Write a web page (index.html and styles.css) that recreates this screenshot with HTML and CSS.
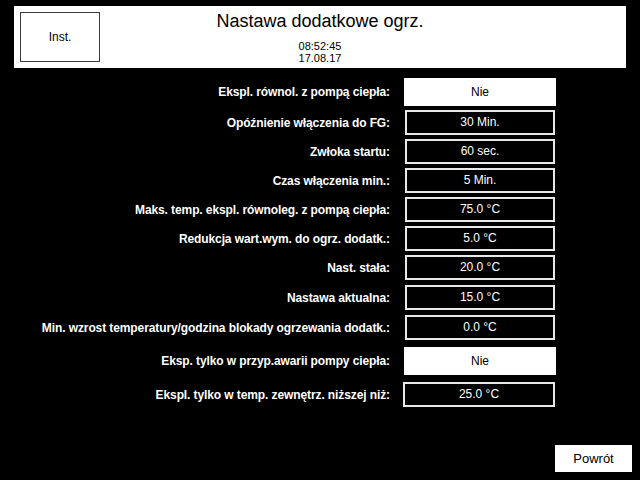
FILE: index.html
```html
<!DOCTYPE html>
<html lang="pl">
<head>
    <meta charset="UTF-8">
    <title>Nastawa dodatkowe ogrz.</title>
    <link rel="stylesheet" href="styles.css">
</head>
<body>

    <div class="header">
        <button class="btn-inst">Inst.</button>
        <div class="title">
            <h1>Nastawa dodatkowe ogrz.</h1>
            <div class="clock">08:52:45<br>17.08.17</div>
        </div>
    </div>

    <div class="settings">
        <div class="row toggle">
            <span class="label">Ekspl. równol. z pompą ciepła:</span>
            <span class="value">Nie</span>
        </div>
        <div class="row">
            <span class="label">Opóźnienie włączenia do FG:</span>
            <span class="value">30 Min.</span>
        </div>
        <div class="row">
            <span class="label">Zwłoka startu:</span>
            <span class="value">60 sec.</span>
        </div>
        <div class="row">
            <span class="label">Czas włączenia min.:</span>
            <span class="value">5 Min.</span>
        </div>
        <div class="row">
            <span class="label">Maks. temp. ekspl. równoleg. z pompą ciepła:</span>
            <span class="value">75.0 °C</span>
        </div>
        <div class="row">
            <span class="label">Redukcja wart.wym. do ogrz. dodatk.:</span>
            <span class="value">5.0 °C</span>
        </div>
        <div class="row">
            <span class="label">Nast. stała:</span>
            <span class="value">20.0 °C</span>
        </div>
        <div class="row wide-top">
            <span class="label">Nastawa aktualna:</span>
            <span class="value">15.0 °C</span>
        </div>
        <div class="row wide-top">
            <span class="label">Min. wzrost temperatury/godzina blokady ogrzewania dodatk.:</span>
            <span class="value">0.0 °C</span>
        </div>
        <div class="row toggle wider-top">
            <span class="label">Eksp. tylko w przyp.awarii pompy ciepła:</span>
            <span class="value">Nie</span>
        </div>
        <div class="row wider-top last">
            <span class="label">Ekspl. tylko w temp. zewnętrz. niższej niż:</span>
            <span class="value">25.0 °C</span>
        </div>
    </div>

    <div class="footer">
        <button class="btn-back">Powrót</button>
    </div>

</body>
</html>
```

FILE: styles.css
```css
html, body {
    margin: 0;
    height: 100%;
}
body {
    background-color: #000;
    color: #fff;
    font-family: "Liberation Sans", Arial, sans-serif;
    width: 640px;
    height: 480px;
    overflow: hidden;
    position: relative;
}
.header {
    margin: 6px 14px 0 14px;
    height: 62px;
    background-color: #fff;
    color: #000;
    display: flex;
    align-items: flex-start;
}
.btn-inst {
    margin: 6px 0 0 6px;
    width: 80px;
    height: 50px;
    background-color: #fff;
    border: 1px solid #3c3c3c;
    font-family: inherit;
    font-size: 12px;
    color: #000;
    padding: 0;
}
.title {
    flex: 1;
    text-align: center;
    margin-right: 86px;
}
h1 {
    font-size: 18px;
    font-weight: normal;
    margin: 5px 0 0 0;
    line-height: 20px;
}
.clock {
    font-size: 11px;
    line-height: 12px;
    margin-top: 9px;
}
.settings {
    margin-top: 10px;
    display: flex;
    flex-direction: column;
    gap: 4px;
}
.row {
    display: grid;
    grid-template-columns: 390px 150px;
    column-gap: 15px;
    align-items: center;
    height: 25px;
}
.row.toggle {
    height: 28px;
    column-gap: 14px;
}
.row.wide-top {
    margin-top: 1px;
}
.row.wider-top {
    margin-top: 3px;
}
.label {
    text-align: right;
    font-weight: bold;
    font-size: 12px;
    letter-spacing: -0.1px;
}
.value {
    box-sizing: border-box;
    height: 25px;
    border: 2px solid #e8e8e8;
    text-align: center;
    font-size: 12px;
    line-height: 21px;
}
.toggle .value {
    height: 28px;
    width: 152px;
    border: none;
    background-color: #fff;
    color: #000;
    line-height: 28px;
}
.last .value {
    margin-left: -2px;
}
.footer {
    position: absolute;
    right: 8px;
    bottom: 8px;
}
.btn-back {
    width: 77px;
    height: 27px;
    background-color: #fff;
    border: none;
    font-family: inherit;
    font-size: 13px;
    color: #000;
    padding: 0;
}
```
